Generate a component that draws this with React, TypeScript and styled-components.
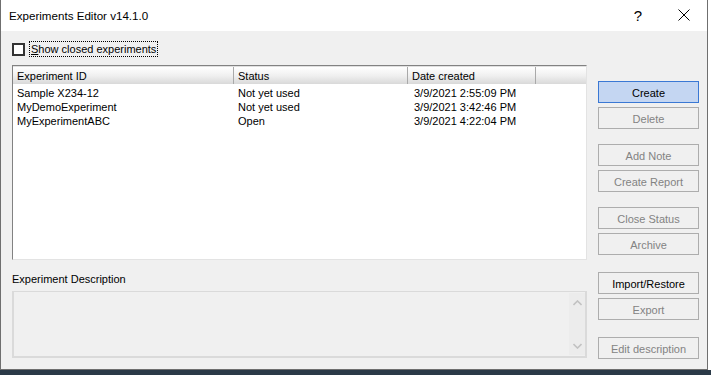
import styled, { createGlobalStyle } from "styled-components";

const GlobalStyle = createGlobalStyle`
  html, body {
    margin: 0;
    padding: 0;
    background: #ffffff;
  }
  body {
    font-family: "Liberation Sans", Arial, sans-serif;
    font-size: 11px;
    color: #000;
  }
`;

type Row = { id: string; status: string; created: string };

const rows: Row[] = [
  { id: "Sample X234-12", status: "Not yet used", created: "3/9/2021 2:55:09 PM" },
  { id: "MyDemoExperiment", status: "Not yet used", created: "3/9/2021 3:42:46 PM" },
  { id: "MyExperimentABC", status: "Open", created: "3/9/2021 4:22:04 PM" },
];

type Btn = { label: string; enabled?: boolean; primary?: boolean; space: number };

const buttons: Btn[] = [
  { label: "Create", enabled: true, primary: true, space: 50 },
  { label: "Delete", space: 4 },
  { label: "Add Note", space: 15 },
  { label: "Create Report", space: 4 },
  { label: "Close Status", space: 15 },
  { label: "Archive", space: 4 },
  { label: "Import/Restore", enabled: true, space: 17 },
  { label: "Export", space: 4 },
  { label: "Edit description", space: 17 },
];

const App = () => {
  return (
    <>
      <GlobalStyle />
      <Window>
        <TitleBar>
          <Title>Experiments Editor v14.1.0</Title>
          <TitleButton>?</TitleButton>
          <TitleButton>
            <svg width="12" height="12" viewBox="0 0 12 12">
              <path d="M0.5 0.5L11.5 11.5M11.5 0.5L0.5 11.5" stroke="#000" strokeWidth="1" fill="none" />
            </svg>
          </TitleButton>
        </TitleBar>
        <Body>
          <LeftColumn>
            <CheckRow>
              <CheckBox />
              <CheckLabel>
                <u>S</u>how closed experiments
              </CheckLabel>
            </CheckRow>
            <ListBox>
              <HeaderRow>
                <HeaderCell $w={221}>Experiment ID</HeaderCell>
                <HeaderCell $w={174}>Status</HeaderCell>
                <HeaderCell $w={128}>Date created</HeaderCell>
                <HeaderCell $w={49} $last />
              </HeaderRow>
              <Rows>
                {rows.map((r) => (
                  <DataRow key={r.id}>
                    <Cell $w={221}>{r.id}</Cell>
                    <Cell $w={174}>{r.status}</Cell>
                    <Cell $w={128}>{r.created}</Cell>
                  </DataRow>
                ))}
              </Rows>
            </ListBox>
            <DescLabel>Experiment Description</DescLabel>
            <DescBox>
              <DescText />
              <ScrollBar>
                <svg width="9" height="6" viewBox="0 0 9 6">
                  <path d="M0.5 5L4.5 1L8.5 5" stroke="#c2c2c2" strokeWidth="1.6" fill="none" />
                </svg>
                <svg width="9" height="6" viewBox="0 0 9 6">
                  <path d="M0.5 1L4.5 5L8.5 1" stroke="#c2c2c2" strokeWidth="1.6" fill="none" />
                </svg>
              </ScrollBar>
            </DescBox>
          </LeftColumn>
          <ButtonColumn>
            {buttons.map((b) => (
              <ActionButton key={b.label} $enabled={!!b.enabled} $primary={!!b.primary} $space={b.space}>
                {b.label}
              </ActionButton>
            ))}
          </ButtonColumn>
        </Body>
      </Window>
      <Desktop />
    </>
  );
};

export default App;

const Window = styled.div`
  width: 706px;
  height: 369px;
  border: 1px solid #6f6f6f;
  border-top: none;
  background: #f0f0f0;
  display: flex;
  flex-direction: column;
`;

const Desktop = styled.div`
  width: 711px;
  height: 5px;
  background: #2b3a48;
`;

const TitleBar = styled.div`
  height: 31px;
  background: #ffffff;
  display: flex;
  align-items: center;
  padding-left: 8px;
`;

const Title = styled.div`
  flex: 1;
  font-size: 11.6px;
  padding-bottom: 1px;
`;

const TitleButton = styled.div`
  width: 46px;
  height: 31px;
  display: flex;
  align-items: center;
  justify-content: center;
  font-size: 15px;
  padding-bottom: 1px;
  box-sizing: border-box;
`;

const Body = styled.div`
  flex: 1;
  display: flex;
  padding-left: 11px;
`;

const LeftColumn = styled.div`
  width: 575px;
  display: flex;
  flex-direction: column;
`;

const CheckRow = styled.div`
  margin-top: 10px;
  height: 16px;
  display: flex;
  align-items: center;
  gap: 4px;
`;

const CheckBox = styled.div`
  width: 9px;
  height: 9px;
  border: 2px solid #333333;
  background: #ffffff;
`;

const CheckLabel = styled.div`
  border: 1px dotted #000;
  padding: 0 1px;
  line-height: 14px;
`;

const ListBox = styled.div`
  margin-top: 8px;
  height: 193px;
  background: #ffffff;
  border-top: 1px solid #828282;
  border-left: 1px solid #828282;
  border-right: 1px solid #e3e3e3;
  border-bottom: 1px solid #e3e3e3;
  display: flex;
  flex-direction: column;
`;

const HeaderRow = styled.div`
  display: flex;
  height: 17px;
  background: linear-gradient(#ffffff, #f0f0f0 50%, #d9d9d9);
  border-top: 1px solid #e0e0e0;
`;

const HeaderCell = styled.div<{ $w: number; $last?: boolean }>`
  width: ${(p) => p.$w}px;
  box-sizing: border-box;
  padding-left: 4px;
  line-height: 18px;
  border-right: 1px solid ${(p) => (p.$last ? "transparent" : "#a9a9a9")};
`;

const Rows = styled.div`
  padding-top: 2px;
`;

const DataRow = styled.div`
  display: flex;
  height: 14px;
  line-height: 14px;
`;

const Cell = styled.div<{ $w: number }>`
  width: ${(p) => p.$w}px;
  padding-left: 4px;
  box-sizing: border-box;
  white-space: nowrap;
  &:nth-child(3) {
    padding-left: 6px;
  }
`;

const DescLabel = styled.div`
  margin-top: 11px;
  line-height: 16px;
`;

const DescBox = styled.div`
  margin-top: 4px;
  height: 64px;
  border: 2px solid #dadada;
  border-top-width: 1px;
  display: flex;
  background: #f0f0f0;
`;

const DescText = styled.div`
  flex: 1;
`;

const ScrollBar = styled.div`
  width: 16px;
  margin: 1px 0;
  background: #ececec;
  display: flex;
  flex-direction: column;
  align-items: center;
  justify-content: space-between;
  padding: 7px 0 6px;
`;

const ButtonColumn = styled.div`
  margin-left: 11px;
  width: 101px;
  display: flex;
  flex-direction: column;
`;

const ActionButton = styled.div<{ $enabled: boolean; $primary: boolean; $space: number }>`
  margin-top: ${(p) => p.$space}px;
  height: 20px;
  border: 1px solid ${(p) => (p.$primary ? "#3a78d4" : "#adadad")};
  background: ${(p) => (p.$primary ? "#c4d6f2" : "#f0f0f0")};
  color: ${(p) => (p.$enabled ? "#000000" : "#838383")};
  display: flex;
  align-items: center;
  justify-content: center;
  white-space: nowrap;
  padding-top: 1px;
  box-sizing: border-box;
  height: 22px;
`;
